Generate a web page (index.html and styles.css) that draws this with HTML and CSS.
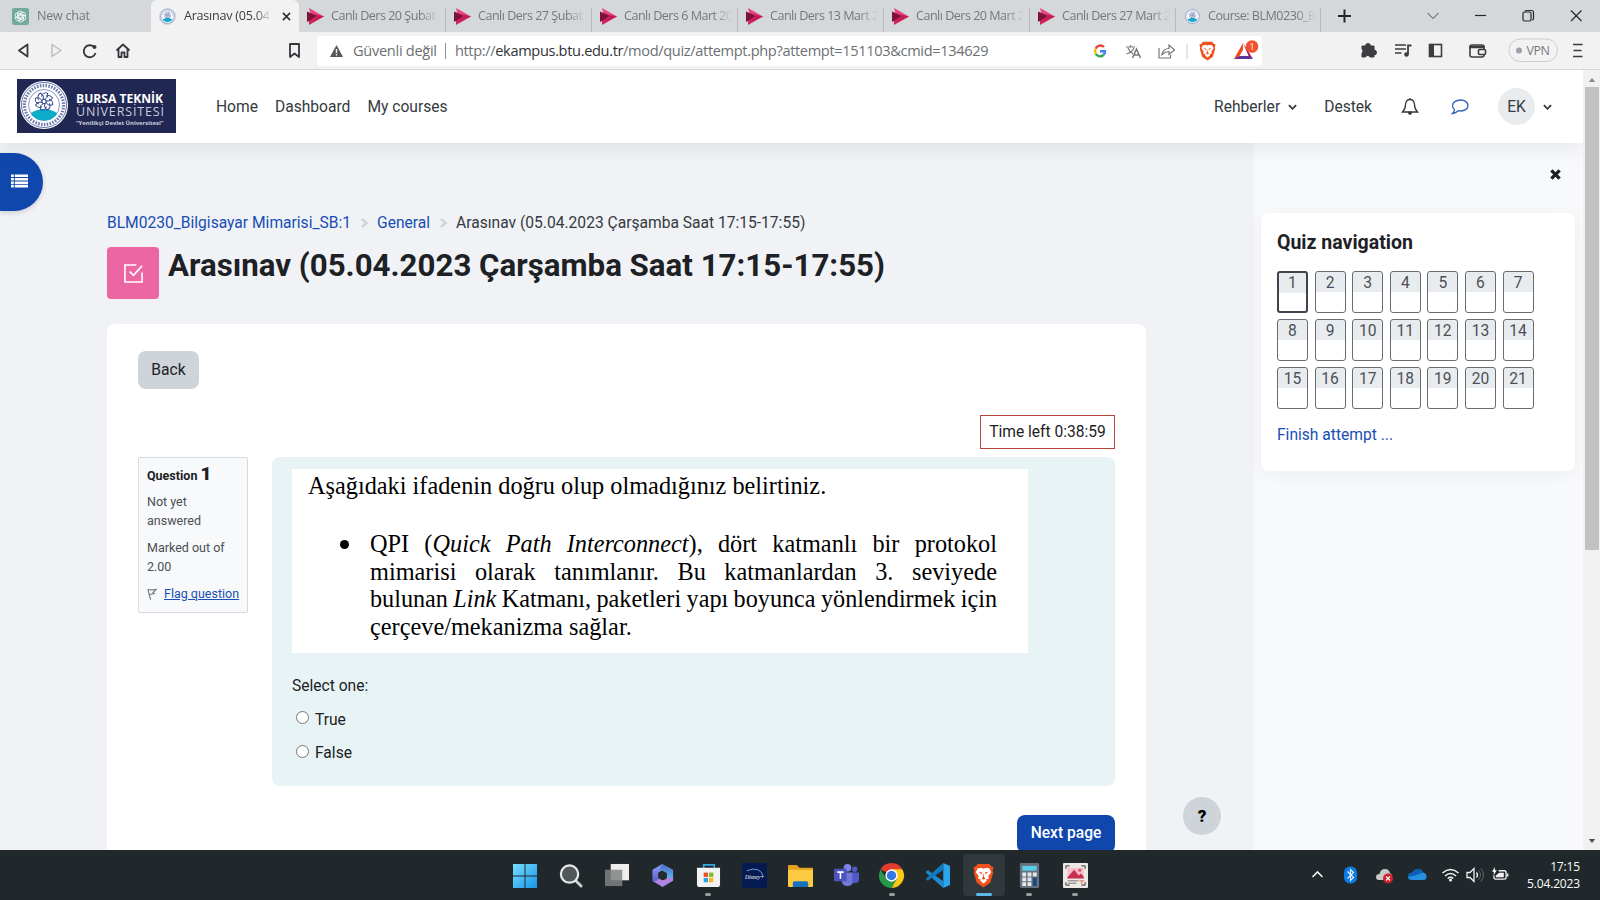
FILE: index.html
```html
<!DOCTYPE html>
<html lang="tr">
<head>
<meta charset="utf-8">
<title>Arasınav (05.04.2023 Çarşamba Saat 17:15-17:55)</title>
<link rel="stylesheet" href="styles.css">
</head>
<body>
<svg class="defs" width="0" height="0" aria-hidden="true">
  <defs>
    <symbol id="stream" viewBox="0 0 17 17">
      <path d="M2 0 17 8.500 5 12z" fill="#e8447c"/><path d="M17 8.500 2 17V11z" fill="#d3225c"/><path d="M0 3.500 10 8 0 14z" fill="#7c1238"/><path d="M4 5.500 17 8.500 5 13.500 10 8z" fill="#c41b50"/>
    </symbol>
    <symbol id="seal" viewBox="0 0 48 48">
      <circle cx="24" cy="24" r="24" fill="#fff"/>
      <circle cx="24" cy="24" r="22.500" fill="none" stroke="#3c4f96" stroke-width=".8"/>
      <circle cx="24" cy="24" r="19.500" fill="none" stroke="#6d7aac" stroke-width="3.200" stroke-dasharray="1.600 1.300"/>
      <circle cx="24" cy="24" r="15.500" fill="#fff" stroke="#3c4f96" stroke-width=".6"/>
      <path d="M12 34Q24 24 36 34Q32 39.500 24 39.500Q16 39.500 12 34z" fill="#0eabca"/>
      <path d="M11 32Q24 24 37 32L36 35H12z" fill="#0eabca"/>
      <g fill="none" stroke="#35478f" stroke-width="1">
        <circle cx="24" cy="20.500" r="2.200"/>
        <path id="petal" d="M24 18.500q4.500-1 3.500-6.500q-4.500-1-6 3.500"/>
        <use href="#petal" transform="rotate(45 24 20.500)"/><use href="#petal" transform="rotate(90 24 20.500)"/><use href="#petal" transform="rotate(135 24 20.500)"/><use href="#petal" transform="rotate(180 24 20.500)"/><use href="#petal" transform="rotate(225 24 20.500)"/><use href="#petal" transform="rotate(270 24 20.500)"/><use href="#petal" transform="rotate(315 24 20.500)"/>
      </g>
    </symbol>
    <symbol id="lion" viewBox="0 0 22 26">
      <path d="M5 1h12l2 2.500 2.500 1-1 4 .5 2-3 10L11 25.500 4 20.500 1 10.500l.5-2-1-4 2.500-1z" fill="#f1501f"/>
      <path d="m11 6-2-.8-4 .3-2 4 3 4-.7 2.500 3.200 1.500-1 1 3.500 2.800 3.500-2.800-1-1 3.200-1.500L16 13.500l3-4-2-4-4-.3z" fill="#fff"/>
      <path d="m6 9 3.500 1L9 12zm10 0-3.500 1 .5 2zM11 10l.6 4.500L13 16l-2 1.500L9 16l1.400-1.500z" fill="#f1501f"/>
    </symbol>
    <symbol id="down" viewBox="0 0 10 6"><path d="m1 1 4 4 4-4" fill="none" stroke="#343a40" stroke-width="2"/></symbol>
  </defs>
</svg>

<header class="tabs">
  <div class="tab first"><svg class="fav" viewBox="0 0 17 17"><rect width="17" height="17" rx="2" fill="#74aa9c"/><g fill="none" stroke="#fff" stroke-width=".8"><path id="knot" d="M6 8V5.200Q6 3 8.300 3q1.500 0 2.200 1L7 6v4"/><use href="#knot" transform="rotate(60 8.500 8.500)"/><use href="#knot" transform="rotate(120 8.500 8.500)"/><use href="#knot" transform="rotate(180 8.500 8.500)"/><use href="#knot" transform="rotate(240 8.500 8.500)"/><use href="#knot" transform="rotate(300 8.500 8.500)"/></g></svg><span class="label">New chat</span></div>
  <div class="tab active"><svg class="fav"><use href="#seal"/></svg><span class="label">Arasınav (05.04</span><svg class="x" viewBox="0 0 10 10"><path d="m1 1 8 8M9 1 1 9" stroke="#2b2d30" stroke-width="1.700"/></svg></div>
  <div class="tab wide"><svg class="fav"><use href="#stream"/></svg><span class="label">Canlı Ders 20 Şubat</span></div>
  <div class="tab"><svg class="fav"><use href="#stream"/></svg><span class="label">Canlı Ders 27 Şubat</span></div>
  <div class="tab"><svg class="fav"><use href="#stream"/></svg><span class="label">Canlı Ders 6 Mart 20</span></div>
  <div class="tab"><svg class="fav"><use href="#stream"/></svg><span class="label">Canlı Ders 13 Mart 2</span></div>
  <div class="tab"><svg class="fav"><use href="#stream"/></svg><span class="label">Canlı Ders 20 Mart 2</span></div>
  <div class="tab"><svg class="fav"><use href="#stream"/></svg><span class="label">Canlı Ders 27 Mart 2</span></div>
  <div class="tab course"><svg class="fav"><use href="#seal"/></svg><span class="label">Course: BLM0230_B</span></div>
  <svg class="strip-icons" viewBox="0 0 278 32" fill="none" stroke="#26282b">
    <path d="M17 16h13M23.500 9.500v13" stroke-width="2"/>
    <path d="m106.500 13 5.500 5.500 5.500-5.500" stroke="#444"/><path d="M154 15.500h11" stroke-width="1.200"/>
    <rect x="202" y="12" width="8" height="9" rx="1.500" stroke-width="1.200"/><path d="M204 11.500q0-1 1.500-1h5q2 0 2 2v6q0 1.500-1.500 1.500" stroke-width="1.200"/>
    <path d="m250 10.500 10.500 10.500M260.500 10.500 250 21" stroke-width="1.200"/>
  </svg>
</header>

<div class="toolbar">
  <svg class="nav-icons" viewBox="0 0 317 38" fill="none" stroke="#34373b" stroke-width="1.800" stroke-linejoin="round">
    <path d="M27.500 12.500 19 18.500 27.500 24.500z"/><path d="m52 12.500 9 6-9 6z" stroke="#b9bbbe" stroke-width="1.400"/>
    <path d="M94 15a6 6 0 1 0 1.500 6"/><circle cx="94.500" cy="15" r="2" fill="#34373b" stroke="none"/>
    <path d="m116.500 18.500 6.500-6 6.500 6M118.500 17v8h3v-4.500h3V25h3v-8"/>
    <path d="M290 12h9v13l-4.500-3.500L290 25z"/>
  </svg>
  <div class="address">
    <svg class="warn" viewBox="0 0 13 12"><path d="M6.500 0 13 12H0z" fill="#54575b"/><path d="M6.500 4v4M6.500 9v1.500" stroke="#fff" stroke-width="1.400"/></svg>
    <span class="unsafe">Güvenli değil</span><i class="bar"></i>
    <span class="url">http://<b>ekampus.btu.edu.tr</b>/mod/quiz/attempt.php?attempt=151103&amp;cmid=134629</span>
    <svg class="addr-icons" viewBox="0 0 175 30" fill="none">
      <g stroke-width="2.400"><path d="M17 11A5 5 0 0 0 8.700 12.700" stroke="#ea4335"/><path d="M8.700 12.700a5 5 0 0 0 0 5" stroke="#fbbc05"/><path d="M8.700 17.700A5 5 0 0 0 16.500 19" stroke="#34a853"/><path d="M16.500 19q1.500-1.500 1.500-3.700h-5" stroke="#4285f4"/></g>
      <g stroke="#74777b" stroke-width="1.200"><path d="M39 11h9M43.500 9v2M41 12q2 4.500 5 6M47 12q-2 4.500-7.500 6"/><path d="m45.500 22 4-9 4 9M47 19h5" stroke-width="1.500"/><path d="M72 12v10h11.500v-3"/><path d="M75 18.500q1-6 7-6V9l5.500 5-5.500 4.500v-3q-4 0-7 3z"/></g>
      <path d="M100 8v15" stroke="#c9cbce"/>
      <svg x="111.500" y="5" width="18" height="20"><use href="#lion"/></svg>
      <path d="m156 7-9 16h9z" fill="#f0491e"/><path d="m156 7 10 16-4-2z" fill="#9e1f63"/><path d="M147 23h19l-4-3h-9z" fill="#5b35a2"/><path d="m156.500 13-4 7h8z" fill="#fff"/>
      <circle cx="165" cy="10.500" r="6.300" fill="#f4512c"/><text x="165" y="14" text-anchor="middle" class="count">1</text>
    </svg>
  </div>
  <svg class="ext-icons" viewBox="0 0 338 38" fill="none" stroke="#3b3d40">
    <path d="M101 15h3.500a2.500 2.500 0 1 1 5 0h3.500v4a2.400 2.400 0 1 1 0 5v2h-4a2.400 2.400 0 0 0-4.500 0H101v-4a2.500 2.500 0 0 0 0-4z" fill="#3b3d40" transform="translate(-1 -1)"/>
    <path d="M133 13h11M133 17h11M133 21h6.500" stroke-width="1.700"/><path d="M146 22v-8.500h3.500" stroke-width="1.800"/><circle cx="144.500" cy="22.500" r="2.300" fill="#3b3d40" stroke="none"/>
    <rect x="167.500" y="12.500" width="12" height="12" stroke-width="1.600"/><rect x="167.500" y="12.500" width="4" height="12" fill="#3b3d40"/>
    <rect x="208" y="13" width="14" height="12" rx="2" stroke-width="1.600"/><path d="M207.500 15h15" stroke-width="2.500"/><rect x="216.500" y="17.500" width="7" height="5" rx="1" fill="#f2f2f2" stroke-width="1.600"/>
    <rect x="247" y="7" width="48.500" height="22.500" rx="11.200" stroke="#cacccf"/><circle cx="257" cy="18.500" r="3" fill="#9aa0ad" stroke="none"/><text x="264.500" y="23" class="vpn" textLength="23.500">VPN</text>
    <path d="M311 12.500h9.500M311.500 18.500h8M311 24.500h9.500" stroke-width="1.700"/>
  </svg>
</div>

<main class="viewport">
  <div class="page">
    <nav class="navbar">
      <div class="brand"><svg class="seal"><use href="#seal"/></svg><div class="brand-text"><b>BURSA TEKNİK</b><span>ÜNİVERSİTESİ</span><em>“Yenilikçi Devlet Üniversitesi”</em></div></div>
      <a class="home">Home</a><a class="dash">Dashboard</a><a>My courses</a>
      <div class="user">
        <a>Rehberler</a><svg class="caret"><use href="#down"/></svg><a class="destek">Destek</a>
        <svg class="bell" viewBox="0 0 16 17" fill="none" stroke="#343a40" stroke-width="1.300"><path d="M8 1.500q4 0 4.500 5 0 4.500 3 7.500H.5q3-3 3-7.500Q4 1.500 8 1.500zM8 0v2"/><path d="M6.500 14.500h3q-.3 1.800-1.500 1.800t-1.500-1.800z" fill="#343a40"/></svg>
        <svg class="chat" viewBox="0 0 18 16" fill="none" stroke="#315fbd" stroke-width="1.300"><path d="M9.500 1C14 1 17 3.500 17 6.500S14 12 9.500 12q-1.300 0-2.300-.3Q5 14 1.500 14.500q2-2 2-4Q1.500 9 1.500 6.500C1.500 3.500 5 1 9.500 1z"/></svg>
        <span class="avatar">EK</span><svg class="caret last"><use href="#down"/></svg>
      </div>
    </nav>
    <div class="body">
      <button class="index-toggle" aria-label="Course index"><svg viewBox="0 0 18 14" fill="#fff"><path d="M0 0h3v2.800H0zM4 0h14v2.800H4zM0 3.700h3v2.800H0zM4 3.700h14v2.800H4zM0 7.400h3v2.800H0zM4 7.400h14v2.800H4zM0 11.100h3v2.800H0zM4 11.100h14v2.800H4z"/></svg></button>
      <section class="content">
        <div class="crumbs"><a>BLM0230_Bilgisayar Mimarisi_SB:1</a><svg viewBox="0 0 7 10"><path d="m1 1 4.500 4L1 9"/></svg><a>General</a><svg viewBox="0 0 7 10"><path d="m1 1 4.500 4L1 9"/></svg><span>Arasınav (05.04.2023 Çarşamba Saat 17:15-17:55)</span></div>
        <div class="title"><span class="quiz-icon"><svg viewBox="0 0 20 20" fill="none" stroke="#fff" stroke-width="1.700"><path d="M13 1H1v18h18V9M6 8l4 4 9-10"/></svg></span><h1>Arasınav (05.04.2023 Çarşamba Saat 17:15-17:55)</h1></div>
        <div class="card">
          <button class="back">Back</button>
          <div class="timer">Time left 0:38:59</div>
          <div class="question">
            <aside class="info">
              <h3>Question <b>1</b></h3><p>Not yet answered</p><p>Marked out of 2.00</p>
              <p class="flag"><svg viewBox="0 0 11 13" fill="none" stroke="#6a737b" stroke-width="1.200"><path d="M1 1.500 4 13M1 1.500q4 1 9 0L6.500 5 8 6 3 7"/></svg><a>Flag question</a></p>
            </aside>
            <div class="formulation">
              <div class="scan">
                <p class="lead">Aşağıdaki ifadenin doğru olup olmadığınız belirtiniz.</p>
                <div class="item"><i class="dot"></i><div class="statement">
                  <p>QPI (<em>Quick Path Interconnect</em>), dört katmanlı bir protokol</p>
                  <p>mimarisi olarak tanımlanır. Bu katmanlardan 3. seviyede</p>
                  <p class="tight">bulunan <em>Link</em> Katmanı, paketleri yapı boyunca yönlendirmek için</p>
                  <p class="end">çerçeve/mekanizma sağlar.</p>
                </div></div>
              </div>
              <div class="prompt">Select one:</div>
              <label><i class="radio"></i>True</label>
              <label><i class="radio"></i>False</label>
            </div>
          </div>
          <button class="next">Next page</button>
        </div>
        <button class="help">?</button>
      </section>
      <aside class="drawer">
        <svg class="close" viewBox="0 0 12 12"><path d="m1.500 1.500 9 9M10.500 1.500l-9 9" stroke="#1d2125" stroke-width="3.600"/></svg>
        <div class="quiz-nav">
          <h2>Quiz navigation</h2>
          <div class="grid"><a class="current">1</a><a>2</a><a>3</a><a>4</a><a>5</a><a>6</a><a>7</a><a>8</a><a>9</a><a>10</a><a>11</a><a>12</a><a>13</a><a>14</a><a>15</a><a>16</a><a>17</a><a>18</a><a>19</a><a>20</a><a>21</a></div>
          <a class="finish">Finish attempt ...</a>
        </div>
      </aside>
    </div>
  </div>
  <div class="scrollbar"><svg viewBox="0 0 8 5"><path d="M4 0 8 5H0z" fill="#8b8b8b"/></svg><i></i><svg class="bottom" viewBox="0 0 8 5"><path d="M0 0h8L4 5z" fill="#505050"/></svg></div>
</main>

<footer class="taskbar">
  <div class="apps">
    <span><svg viewBox="0 0 26 26"><defs><linearGradient id="win" x2="1" y2="1"><stop stop-color="#7bdcff"/><stop offset="1" stop-color="#1496e8"/></linearGradient></defs><path d="M0 1h12v12H0zM13 1h12v12H13zM0 14h12v12H0zM13 14h12v12H13z" fill="url(#win)"/></svg></span>
    <span><svg viewBox="0 0 26 26" fill="none"><path d="m18 18 6 6" stroke="#cfcfcf" stroke-width="3" stroke-linecap="round"/><circle cx="12" cy="11.500" r="9" fill="#50575b" stroke="#e9e9e9" stroke-width="2.300"/></svg></span>
    <span><svg viewBox="0 0 26 26"><path d="M7 1h19v17H7z" fill="#ededed"/><path d="M1 7h18v17H1z" fill="#7f8183" opacity=".85"/></svg></span>
    <span><svg viewBox="0 0 26 26"><defs><linearGradient id="m1" x2="0" y2="1"><stop stop-color="#8fa0f5"/><stop offset="1" stop-color="#5a55c8"/></linearGradient><linearGradient id="m2" x2="0" y2="1"><stop stop-color="#4a67c9"/><stop offset="1" stop-color="#63d2f4"/></linearGradient></defs><path d="M13 1 2.500 7v11.500L9 22V10l8-5z" fill="url(#m1)"/><path d="m13 1 11 6v11l-7 3V11L9.500 7z" fill="url(#m2)"/><path d="m2.500 18.500 10.500 6.500L24 18.500V14l-11 4-4-2.500q-1 4-6.500 3z" fill="#b184e2"/><path d="m13 8 4.500 2.500v5L13 18l-4.500-2.500v-5z" fill="#222b2e"/></svg></span>
    <span class="running"><svg viewBox="0 0 26 26"><path d="M8 5V2h11v3" fill="none" stroke="#32a9df" stroke-width="1.700"/><path d="M1 5h24v17q0 3-3 3H4q-3 0-3-3z" fill="#f2f2f2"/><path d="M8 10h4.500v4.500H8z" fill="#e9502b"/><path d="M13.500 10H18v4.500h-4.500z" fill="#7eb928"/><path d="M8 15.500h4.500V20H8z" fill="#28a3df"/><path d="M13.500 15.500H18V20h-4.500z" fill="#f5b719"/></svg></span>
    <span><svg viewBox="0 0 26 26"><rect width="26" height="26" fill="#061a52"/><path d="M5 8q13-5 17 5" fill="none" stroke="#6da2df"/><text x="3" y="17" class="disney" textLength="20">Disney+</text></svg></span>
    <span><svg viewBox="0 0 26 26"><path d="M0 3q0-1 1-1h8l3 3h14v6H0z" fill="#e4a11e"/><path d="M0 7h26v17q0 1-1 1H1q-1 0-1-1z" fill="#fbca42"/><path d="M5 25v-4q0-2 2-2h12q2 0 2 2v4z" fill="#1673bb"/></svg></span>
    <span><svg viewBox="0 0 26 26"><circle cx="14" cy="5" r="4" fill="#7b83eb"/><circle cx="21.500" cy="6.500" r="2.800" fill="#5059c9"/><path d="M8 10h12v8q0 6-6 6t-6-6z" fill="#7178d8"/><path d="M19 10h7v7q0 4-4 4t-3-4z" fill="#5059c9"/><rect y="6" width="13" height="13" rx="1" fill="#4b53bc"/><path d="M3.500 9.500h6.500M6.700 9.500v7" stroke="#fff" stroke-width="1.700"/></svg></span>
    <span class="running"><svg viewBox="0 0 26 26"><path d="M13 13 1.740 6.500A13 13 0 0 1 24.260 6.500z" fill="#e33b2e"/><path d="M1.740 6.500A13 13 0 0 0 13 26L18.600 16.200 7.400 16.200z" fill="#27994b"/><path d="M24.260 6.500H13L18.600 16.200 13 26A13 13 0 0 0 24.260 6.500z" fill="#fbc915"/><circle cx="13" cy="13" r="6.400" fill="#fff"/><circle cx="13" cy="13" r="4.900" fill="#3478e5"/></svg></span>
    <span><svg viewBox="0 0 26 26"><path d="m19 0 7 3v20l-7 3z" fill="#2ba4ec"/><path d="m1 9 2-1.500L19 19v7L1 10z" fill="#2089d0"/><path d="m1 17 2 1.500L19 7V0L1 16z" fill="#1279be"/></svg></span>
    <span class="focused"><svg viewBox="0 0 22 26"><use href="#lion"/></svg></span>
    <span class="running"><svg viewBox="0 0 26 26"><rect x="3" width="20" height="26" rx="1.500" fill="#65727d"/><path d="M5.500 3h15v5h-15z" fill="#58cce9"/><path d="M5.500 10h4v4h-4zM11 10h4v4h-4zM16.500 10h4v4h-4zM5.500 15h4v4h-4zM11 15h4v4h-4zM5.500 20h4v4h-4zM11 20h4v4h-4z" fill="#e5e9eb"/><path d="M16.500 15h4v9h-4z" fill="#174a87"/></svg></span>
    <span class="running"><svg viewBox="0 0 26 26"><rect width="26" height="26" rx="1" fill="#ece9e7"/><path d="M3 6V3h4M19 3h4v3M3 20v3h4M19 23h4v-3" fill="none" stroke="#333"/><path d="M4.500 5h17v11h-17z" fill="#f7bfc9"/><path d="m4.500 15 7-8 5 6 2-2 3 3v2h-17z" fill="#c72f50"/><circle cx="17.500" cy="7.500" r="1.700" fill="#e05773"/><path d="M5 18.500h11M5 21h9" stroke="#777"/><path d="M17 18.500h5M19.500 18.500V22" stroke="#e26b51"/></svg></span>
  </div>
  <svg class="tray" viewBox="0 0 193 50" fill="none" stroke="#f2f2f2">
    <path d="m13.500 27 5-5 5 5" stroke-width="1.600"/>
    <rect x="45" y="16.500" width="13" height="17" rx="6" fill="#0a7be6" stroke="none"/><path d="m48.500 21.500 6 6-3 3v-11l3 3-6 6" stroke-width="1.100"/>
    <path d="M80 30q-3 0-3-3t3.500-3q1-5 5.500-5 4 0 5 4 2 1 2 4v3z" fill="#c9c9c9" stroke="none"/><circle cx="89" cy="28.500" r="5" fill="#d51f2d" stroke="none"/><path d="m87 26.500 4 4m0-4-4 4" stroke-width="1.300"/>
    <path d="M113 30q-4 0-4-3.500t4.500-4q2-4 6-3.500 3 0 4.500 3.500 3.500.5 3.500 4t-3 3.500z" fill="#258fe0" stroke="none"/><path d="M109 27q.5-4 4.500-4.500 2-4 6-3.500 3 0 4.500 3.500l-8 3z" fill="#0b60b4" stroke="none"/>
    <g stroke-width="1.600"><path d="M143.500 23q8-7 16 0M146 26q5.500-5 11 0M148.700 28.500q2.800-2.500 5.600 0"/></g><circle cx="151.500" cy="30" r="1.500" fill="#fff" stroke="none"/>
    <path d="M168 22.500h3l4-4v13l-4-4h-3zM177.500 22.500q2 2.500 0 5" stroke-width="1.300"/><path d="M179.500 20.500q4 4.500 0 9M182 18.500q5 6.500 0 13" stroke="#646b6e"/>
  </svg>
  <svg class="battery" viewBox="0 0 18 16" fill="none" stroke="#f2f2f2" stroke-width="1.400"><path d="M7 4h6q2 0 2 2v5q0 2-2 2H4q-2 0-2-2V9M16.700 7v3"/><path d="M7.500 6h5v5H4V9z" fill="#f2f2f2" stroke="none"/><path d="M3 0 0 5h2L1.500 9 5 3.500H3z" fill="#fff" stroke="none"/></svg>
  <div class="clock"><span>17:15</span><span>5.04.2023</span></div>
</footer>
</body>
</html>
```
FILE: styles.css
```css
* { box-sizing: border-box; }
body { margin: 0; width: 1600px; height: 900px; overflow: hidden; display: flex; flex-direction: column; font-family: Roboto, "Liberation Sans", sans-serif; font-size: 15.600px; color: #1d2125; background: #f2f2f2; }
svg { display: block; flex: none; overflow: visible; }
.defs { position: absolute; }
button { border: 0; font: inherit; padding: 0; }
h1, h2, h3, p { margin: 0; }

/* Browser tabs */
.tabs { height: 32px; flex: none; background: #d4d8db; display: flex; font: 12.600px/30px "Open Sans", "Noto Sans", sans-serif; color: #74787c; }
.tab { width: 146px; flex: none; display: flex; align-items: center; padding-left: 8px; position: relative; }
.tab + .tab:not(.active)::after { content: ""; position: absolute; right: 0; top: 8px; bottom: 0; width: 1px; background: #b6babd; }
.tab.first { width: 151px; padding-left: 12px; }
.tab.active { width: 148px; background: #f2f2f2; border-radius: 6px 6px 0 0; color: #3a3d40; }
.tab.wide { width: 147px; }
.tab.course { width: 145px; }
.fav { width: 17px; height: 17px; margin-right: 7px; }
.label { width: 108px; overflow: hidden; white-space: nowrap; letter-spacing: -.520px; mask-image: linear-gradient(90deg, #000 82%, transparent); }
.first .label { letter-spacing: -.25px; margin-left: 1px; }
.active .label { width: 87px; margin: 0 11px 0 1px; letter-spacing: -.25px; }
.x { width: 9px; height: 9px; }
.strip-icons { width: 278px; height: 32px; }

/* Toolbar */
.toolbar { height: 38px; flex: none; display: flex; background: #f2f2f2; border-bottom: 1px solid #d6d6d6; font-family: "Open Sans", "Noto Sans", sans-serif; }
.nav-icons { width: 317px; height: 38px; }
.address { width: 945px; height: 30px; margin-top: 4px; background: #fff; border-radius: 4px; display: flex; align-items: center; padding-left: 13px; font-size: 14.600px; line-height: 24px; color: #6c6f73; white-space: nowrap; }
.warn { width: 13px; height: 12px; margin-right: 10px; }
.unsafe { width: 84px; letter-spacing: -.3px; margin-top: -2px; }
.bar { width: 1px; height: 16px; background: #8b8e92; margin: 0 9px 0 8px; }
.url { width: 633px; letter-spacing: -.350px; margin-top: -2px; }
.url b { font-weight: 400; color: #303336; }
.addr-icons { width: 175px; height: 30px; }
.count { font: 9px "Open Sans", sans-serif; fill: #fff; }
.ext-icons { width: 338px; height: 38px; }
.vpn { font: 12.500px "Open Sans", sans-serif; fill: #777b80; stroke: none; }

/* Page */
.viewport { height: 780px; flex: none; display: flex; }
.page { width: 1583px; display: flex; flex-direction: column; overflow: hidden; }
.navbar { height: 73px; flex: none; background: #fff; display: flex; align-items: center; padding-left: 17px; color: #343a40; box-shadow: 0 3px 26px rgba(0,0,0,.09); z-index: 1; }
.brand { width: 159px; height: 54px; background: #202752; display: flex; align-items: center; padding-left: 3px; margin: -1px 40px 0 0; color: #fff; }
.seal { width: 48px; height: 48px; margin-top: -2px; }
.brand-text { margin: 9px 0 0 8px; display: flex; flex-direction: column; white-space: nowrap; font-family: "Open Sans", sans-serif; }
.brand-text b { font-size: 12.100px; line-height: 13px; }
.brand-text span { font-size: 12.500px; line-height: 13px; letter-spacing: .85px; color: #c9ccdb; }
.brand-text em { font: bold 5.900px/11px "Open Sans", sans-serif; color: #cdd0df; }
.home, .dash { margin-right: 17px; }
.user { margin-left: auto; display: flex; align-items: center; padding-right: 31px; }
.caret { width: 9px; height: 6px; margin-left: 8px; }
.destek { margin-left: 27px; }
.bell { width: 16px; height: 17px; margin-left: 30px; }
.chat { width: 18px; height: 16px; margin-left: 33px; }
.avatar { width: 37px; height: 37px; border-radius: 50%; background: #e9ecef; display: grid; place-items: center; margin-left: 29px; }
.body { flex: 1; display: flex; background: #f0f2f6; min-height: 0; }
.index-toggle { width: 43px; height: 58px; margin-top: 10px; flex: none; background: #0f47ad; border-radius: 0 29px 29px 0; padding: 0 0 3px 11px; box-shadow: 0 2px 5px rgba(0,0,0,.15); }
.index-toggle svg { width: 17px; height: 14px; }
.content { width: 1211px; flex: none; padding: 70px 0 0 64px; position: relative; }
.crumbs { height: 20px; display: flex; align-items: center; color: #343a40; white-space: nowrap; }
.crumbs a { color: #174eb3; }
.crumbs svg { width: 7px; height: 10px; margin: 0 9.500px; fill: none; stroke: #ced4da; stroke-width: 2.600px; }
.title { display: flex; height: 52px; margin-top: 14px; }
.quiz-icon { width: 52px; height: 52px; border-radius: 4px; background: #eb66a2; display: grid; place-items: center; margin-right: 9px; }
.quiz-icon svg { width: 19px; height: 19px; }
h1 { font-size: 31.250px; line-height: 38px; font-weight: 700; white-space: nowrap; }
.card { width: 1039px; height: 560px; margin-top: 25px; background: #fff; border-radius: 8px; padding: 27px 31px 0; display: flex; flex-direction: column; }
.back { width: 61px; height: 38px; background: #ced4da; border-radius: 8px; color: #1d2125; flex: none; padding-bottom: 1px; }
.timer { width: 135px; height: 34px; margin-top: 26px; align-self: flex-end; border: 1px solid #b5453b; line-height: 32px; text-align: center; flex: none; white-space: nowrap; }
.question { display: flex; justify-content: space-between; margin-top: 8px; flex: none; }
.info { width: 110px; height: 156px; border: 1px solid #d5dbe1; border-radius: 2px; background: #f8f9fa; padding: 3px 7px 0 8px; font-size: 12.500px; line-height: 19px; color: #495057; }
.info h3 { font-size: 12.500px; line-height: 26px; color: #1d2125; white-space: nowrap; font-weight: 700; height: 31px; }
.info h3 b { font-size: 19px; }
.info p { margin-bottom: 8px; }
.info .flag { display: flex; gap: 7px; white-space: nowrap; align-items: center; }
.flag svg { width: 10px; height: 12px; }
.flag a { color: #174eb3; text-decoration: underline; }
.formulation { width: 843px; height: 329px; border-radius: 8px; background: #e7f3f5; padding: 12px 21px 0 20px; }
.scan { width: 736px; height: 184px; background: #fff; padding: 3px 0 0 16px; font: 24.300px/28px "Liberation Serif", serif; color: #000; }
.lead { white-space: nowrap; }
.item { display: flex; margin-top: 30px; }
.statement { width: 627px; }
.statement p { text-align: justify; text-align-last: justify; line-height: 27.700px; white-space: nowrap; }
.statement .tight { word-spacing: -2px; font-size: 24.200px; }
.statement .end { text-align-last: left; }
.dot { width: 9px; height: 9px; border-radius: 50%; background: #000; margin: 10px 21px 0 32px; }
.prompt { margin-top: 23px; line-height: 20px; height: 24px; }
.formulation label { display: flex; align-items: center; height: 33.500px; padding: 6px 0 0 4px; }
.radio { width: 13px; height: 13px; border: 1px solid #767676; background: #fff; border-radius: 50%; margin: -4px 6px 0 0; }
.next { width: 98px; height: 38px; margin-top: 29px; align-self: flex-end; flex: none; border-radius: 8px; background: #0f47ad; color: #fff; font-weight: 500; padding-bottom: 2px; }
.help { position: absolute; left: 1140px; top: 653.500px; width: 38px; height: 38px; border-radius: 50%; background: #ced4da; font-weight: 900; font-size: 17px; }
.drawer { flex: 1; background: #f8f9fb; padding: 26px 8px 0 7px; }
.close { width: 11px; height: 11px; margin: 0 14px 33px auto; }
.quiz-nav { width: 314px; height: 258px; background: #fff; border-radius: 8px; padding: 16px; box-shadow: 0 3px 18px rgba(0,0,0,.05); }
h2 { font-size: 19.500px; line-height: 27px; font-weight: 700; }
.grid { display: grid; grid-template-columns: repeat(7, 31px); gap: 6px 6.600px; margin-top: 15px; }
.grid a { height: 42px; border: 1px solid #686d72; border-radius: 3px; background: linear-gradient(#e9ecef 20px, #fff 20px); text-align: center; line-height: 22px; color: #495057; }
.grid .current { border: 2px solid #3d444b; line-height: 20px; }
.finish { display: block; color: #174eb3; margin-top: 16px; line-height: 20px; }
.scrollbar { width: 17px; background: #f1f1f1; display: flex; flex-direction: column; align-items: center; padding-top: 8px; }
.scrollbar svg { width: 8px; height: 4px; }
.scrollbar i { width: 14px; height: 463px; background: #c1c1c1; margin-top: 5px; }
.scrollbar .bottom { margin: auto 0 7px; }

/* Taskbar */
.taskbar { height: 50px; flex: none; background: #20282b; display: flex; }
.apps { display: flex; align-items: center; margin-left: 504px; gap: 3.870px; height: 50px; }
.apps span { width: 42px; height: 42px; display: grid; place-items: center; position: relative; border-radius: 4px; }
.apps svg { width: 25px; height: 25px; }
.running::after, .focused::after { content: ""; position: absolute; bottom: 0; left: 18px; width: 6px; height: 3px; border-radius: 2px; background: #9a9c9d; }
.apps .focused { background: #30383b; }
.focused::after { left: 13px; width: 16px; background: #5fb8ec; }
.disney { font: italic 6px "Liberation Serif", serif; fill: #fff; }
.tray { width: 193px; height: 50px; margin-left: 203px; }
.battery { width: 17px; height: 15px; margin-top: 17px; }
.clock { margin-left: auto; padding: 9px 20px 0 0; color: #fff; display: flex; flex-direction: column; align-items: flex-end; font: 12px/16.500px "Open Sans", sans-serif; letter-spacing: -.15px; }
```
